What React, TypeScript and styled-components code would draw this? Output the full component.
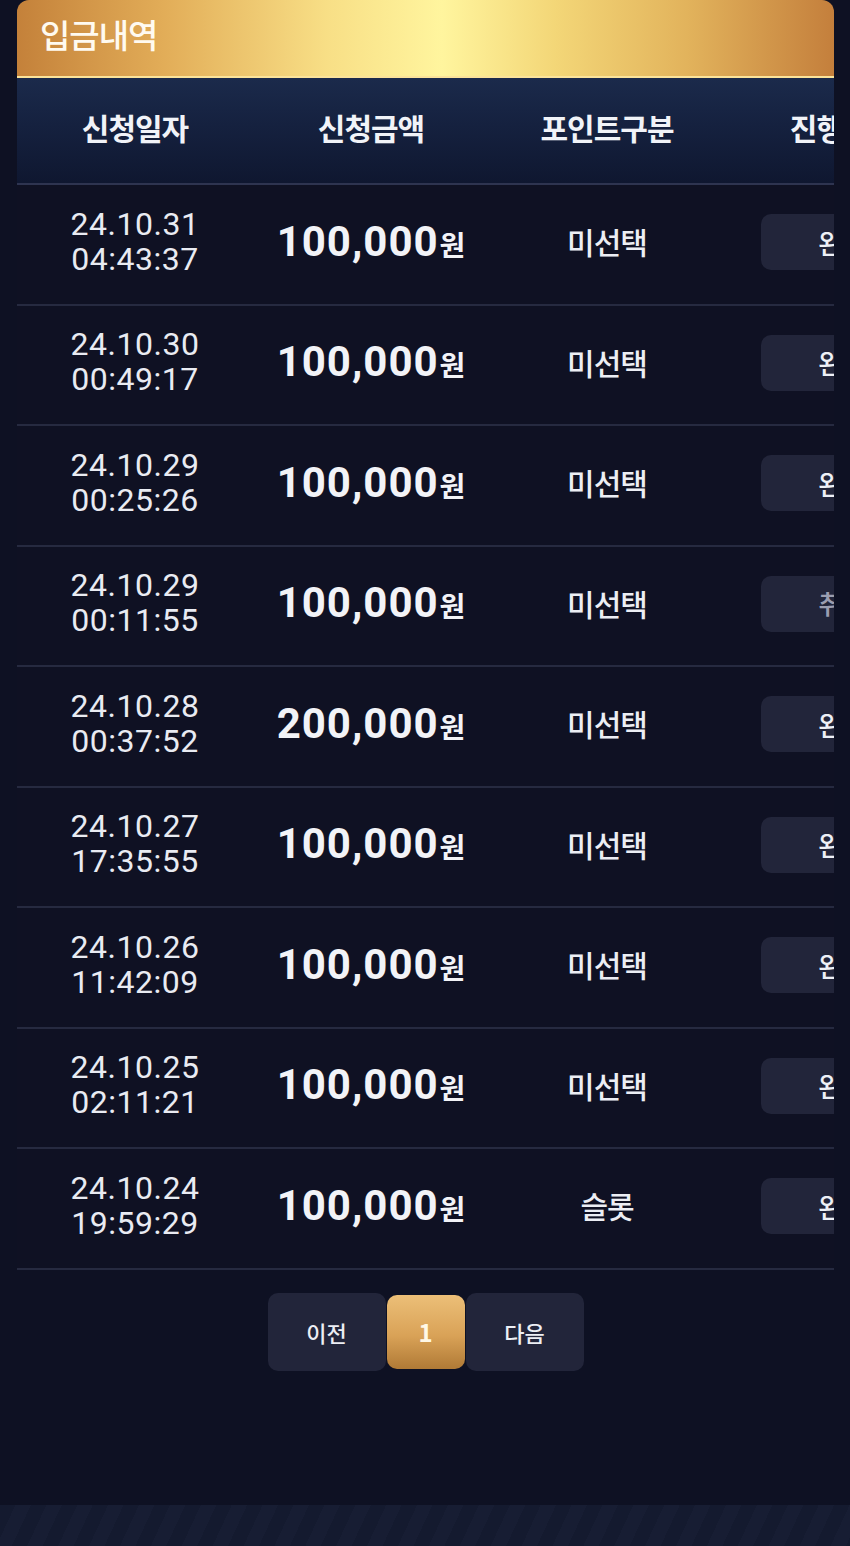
import React from 'react';
import styled, { createGlobalStyle } from 'styled-components';

interface Deposit {
  date: string,
  time: string,
  amount: string,
  point: string,
  status: 'done' | 'cancel',
}

const deposits: Deposit[] = [
  { date: '24.10.31', time: '04:43:37', amount: '100,000', point: '미선택', status: 'done' },
  { date: '24.10.30', time: '00:49:17', amount: '100,000', point: '미선택', status: 'done' },
  { date: '24.10.29', time: '00:25:26', amount: '100,000', point: '미선택', status: 'done' },
  { date: '24.10.29', time: '00:11:55', amount: '100,000', point: '미선택', status: 'cancel' },
  { date: '24.10.28', time: '00:37:52', amount: '200,000', point: '미선택', status: 'done' },
  { date: '24.10.27', time: '17:35:55', amount: '100,000', point: '미선택', status: 'done' },
  { date: '24.10.26', time: '11:42:09', amount: '100,000', point: '미선택', status: 'done' },
  { date: '24.10.25', time: '02:11:21', amount: '100,000', point: '미선택', status: 'done' },
  { date: '24.10.24', time: '19:59:29', amount: '100,000', point: '슬롯', status: 'done' },
];

const columns = ['신청일자', '신청금액', '포인트구분', '진행상태'];

export default function App() {
  return (
    <Page>
      <GlobalStyle />
      <Panel>
        <PanelTitle>입금내역</PanelTitle>
        {/* 표는 패널보다 넓어서 오른쪽이 잘린다 */}
        <TableWrap>
          <Table>
            <HeadRow>
              {columns.map(c => <HeadCell key={c}>{c}</HeadCell>)}
            </HeadRow>
            {deposits.map((d, i) => (
              <Row key={i}>
                <Cell>
                  <DateText>{d.date}<br />{d.time}</DateText>
                </Cell>
                <Cell>
                  <Amount>{d.amount}<Won>원</Won></Amount>
                </Cell>
                <Cell>
                  <PointText>{d.point}</PointText>
                </Cell>
                <Cell>
                  <StatusBadge $cancel={d.status === 'cancel'}>
                    {d.status === 'cancel' ? '취소' : '완료'}
                  </StatusBadge>
                </Cell>
              </Row>
            ))}
          </Table>
        </TableWrap>
        <Pager>
          <PageButton>이전</PageButton>
          <PageButton $active>1</PageButton>
          <PageButton>다음</PageButton>
        </Pager>
      </Panel>
      <Footer />
    </Page>
  )
}

const GlobalStyle = createGlobalStyle`
  html, body {
    margin: 0;
    padding: 0;
    background: #0e1123;
  }
  body {
    font-family: "Noto Sans CJK KR", "Noto Sans", sans-serif;
    color: #eef0f6;
  }
  * { box-sizing: border-box; }
`

const Page = styled.div`
  min-height: 1546px;
  display: flex;
  flex-direction: column;
  background: #0e1123;
`

const Panel = styled.section`
  margin: 0 16px 0 17px;
  display: flex;
  flex-direction: column;
`

const PanelTitle = styled.h2`
  margin: 0;
  height: 78px;
  padding: 11px 0 0 23px;
  border-radius: 12px 12px 0 0;
  border-bottom: 2px solid #fbe39a;
  background: linear-gradient(90deg, #c4813a 0%, #e2ad58 18%, #f8df86 38%, #fff59e 52%, #f3d677 66%, #e2b35c 82%, #c47f3c 100%);
  color: #fffaf0;
  font-size: 33px;
  font-weight: 500;
  line-height: 46px;
  letter-spacing: -1px;
`

const TableWrap = styled.div`
  overflow: hidden;
  width: 100%;
`

const Table = styled.div`
  width: 944px;
  display: flex;
  flex-direction: column;
`

const HeadRow = styled.div`
  display: grid;
  grid-template-columns: repeat(4, 236px);
  height: 107px;
  padding-bottom: 8px;
  align-items: center;
  background: linear-gradient(180deg, #1b2a4b 0%, #15213f 45%, #0f1730 100%);
  border-bottom: 2px solid #2e3450;
`

const HeadCell = styled.div`
  text-align: center;
  font-size: 30px;
  font-weight: 700;
  color: #f1f3f8;
  letter-spacing: -1px;
`

const Row = styled.div`
  display: grid;
  grid-template-columns: repeat(4, 236px);
  height: 120.5px;
  align-items: center;
  border-bottom: 2px solid #262a40;
  background: #0f1123;
`

const Cell = styled.div`
  display: flex;
  justify-content: center;
  align-items: center;
  text-align: center;
`

const DateText = styled.div`
  font-family: Roboto, "Liberation Sans", sans-serif;
  font-size: 32px;
  line-height: 35px;
  letter-spacing: 0.5px;
  color: #e9ebf2;
  margin-top: -5px;
`

const Amount = styled.div`
  font-family: Roboto, "Liberation Sans", sans-serif;
  font-size: 42px;
  font-weight: 700;
  letter-spacing: 1px;
  color: #f2f3f7;
  display: flex;
  align-items: baseline;
  margin-top: -6px;
`

const Won = styled.span`
  font-family: "Noto Sans CJK KR", sans-serif;
  font-size: 28px;
  font-weight: 700;
  letter-spacing: 0;
  margin-left: 1px;
`

const PointText = styled.div`
  font-size: 30px;
  font-weight: 500;
  letter-spacing: -1px;
  color: #eceef4;
  margin-top: -6px;
`

const StatusBadge = styled.div<{ $cancel?: boolean }>`
  width: 164px;
  height: 56px;
  margin-top: -4px;
  border-radius: 10px;
  background: #22253a;
  display: flex;
  align-items: center;
  justify-content: center;
  font-size: 27px;
  font-weight: 500;
  color: ${p => p.$cancel ? '#9b9db0' : '#eef0f6'};
`

const Pager = styled.nav`
  display: flex;
  justify-content: center;
  align-items: center;
  gap: 1px;
  margin-top: 23px;
`

const PageButton = styled.button<{ $active?: boolean }>`
  width: ${p => p.$active ? '78px' : '118px'};
  height: ${p => p.$active ? '74px' : '78px'};
  border: none;
  border-radius: 10px;
  background: ${p => p.$active
    ? 'linear-gradient(180deg, #ecbf78 0%, #d9a257 55%, #b07a36 100%)'
    : '#22253a'};
  color: ${p => p.$active ? '#fff8e6' : '#eceef4'};
  font-family: "Noto Sans CJK KR", sans-serif;
  font-size: ${p => p.$active ? '24px' : '22px'};
  font-weight: ${p => p.$active ? 700 : 500};
  cursor: pointer;
`

const Footer = styled.footer`
  margin-top: auto;
  height: 41px;
  background: repeating-linear-gradient(115deg, #141a2f 0px, #141a2f 14px, #171d33 14px, #171d33 28px);
`
